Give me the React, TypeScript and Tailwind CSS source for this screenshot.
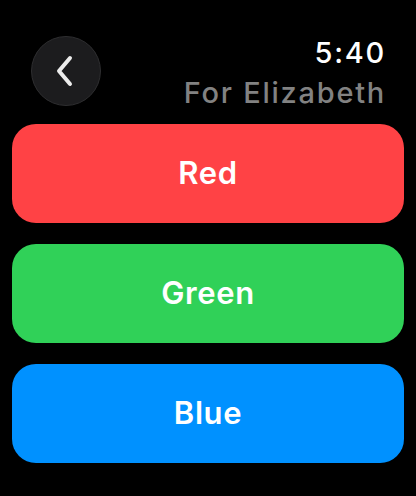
export default function App() {
  const buttons = [
    { label: 'Red', className: 'bg-[#ff4245]' },
    { label: 'Green', className: 'bg-[#30d158]' },
    { label: 'Blue', className: 'bg-[#0091ff]' },
  ];

  return (
    <div
      className="w-[416px] h-[496px] bg-black overflow-hidden flex flex-col"
      style={{ fontFamily: 'Inter, "Noto Sans", sans-serif' }}
    >
      <div className="h-[124px] flex items-start justify-between pl-[31px] pr-[30px] pt-[36px]">
        <button className="w-[70px] h-[70px] rounded-full bg-[#1c1c1e] border border-[#2e2e30] flex items-center justify-center">
          <svg width="20" height="32" viewBox="0 0 20 32" className="-ml-[3px]">
            <path
              d="M15 3 L4 16 L15 29"
              fill="none"
              stroke="#ececec"
              strokeWidth="4"
              strokeLinecap="round"
              strokeLinejoin="round"
            />
          </svg>
        </button>
        <div className="flex flex-col items-end -mt-[3px]">
          <div className="text-[29px] leading-[40px] font-medium text-white tracking-[0.06em]">5:40</div>
          <div className="text-[29px] leading-[40px] font-medium text-[#828282] tracking-[0.06em]">
            For Elizabeth
          </div>
        </div>
      </div>
      <div className="flex flex-col gap-[21px] px-[12px]">
        {buttons.map((b) => (
          <button
            key={b.label}
            className={`h-[99px] rounded-[24px] flex items-center justify-center text-white text-[31px] font-semibold tracking-[0.02em] ${b.className}`}
          >
            {b.label}
          </button>
        ))}
      </div>
    </div>
  );
}
